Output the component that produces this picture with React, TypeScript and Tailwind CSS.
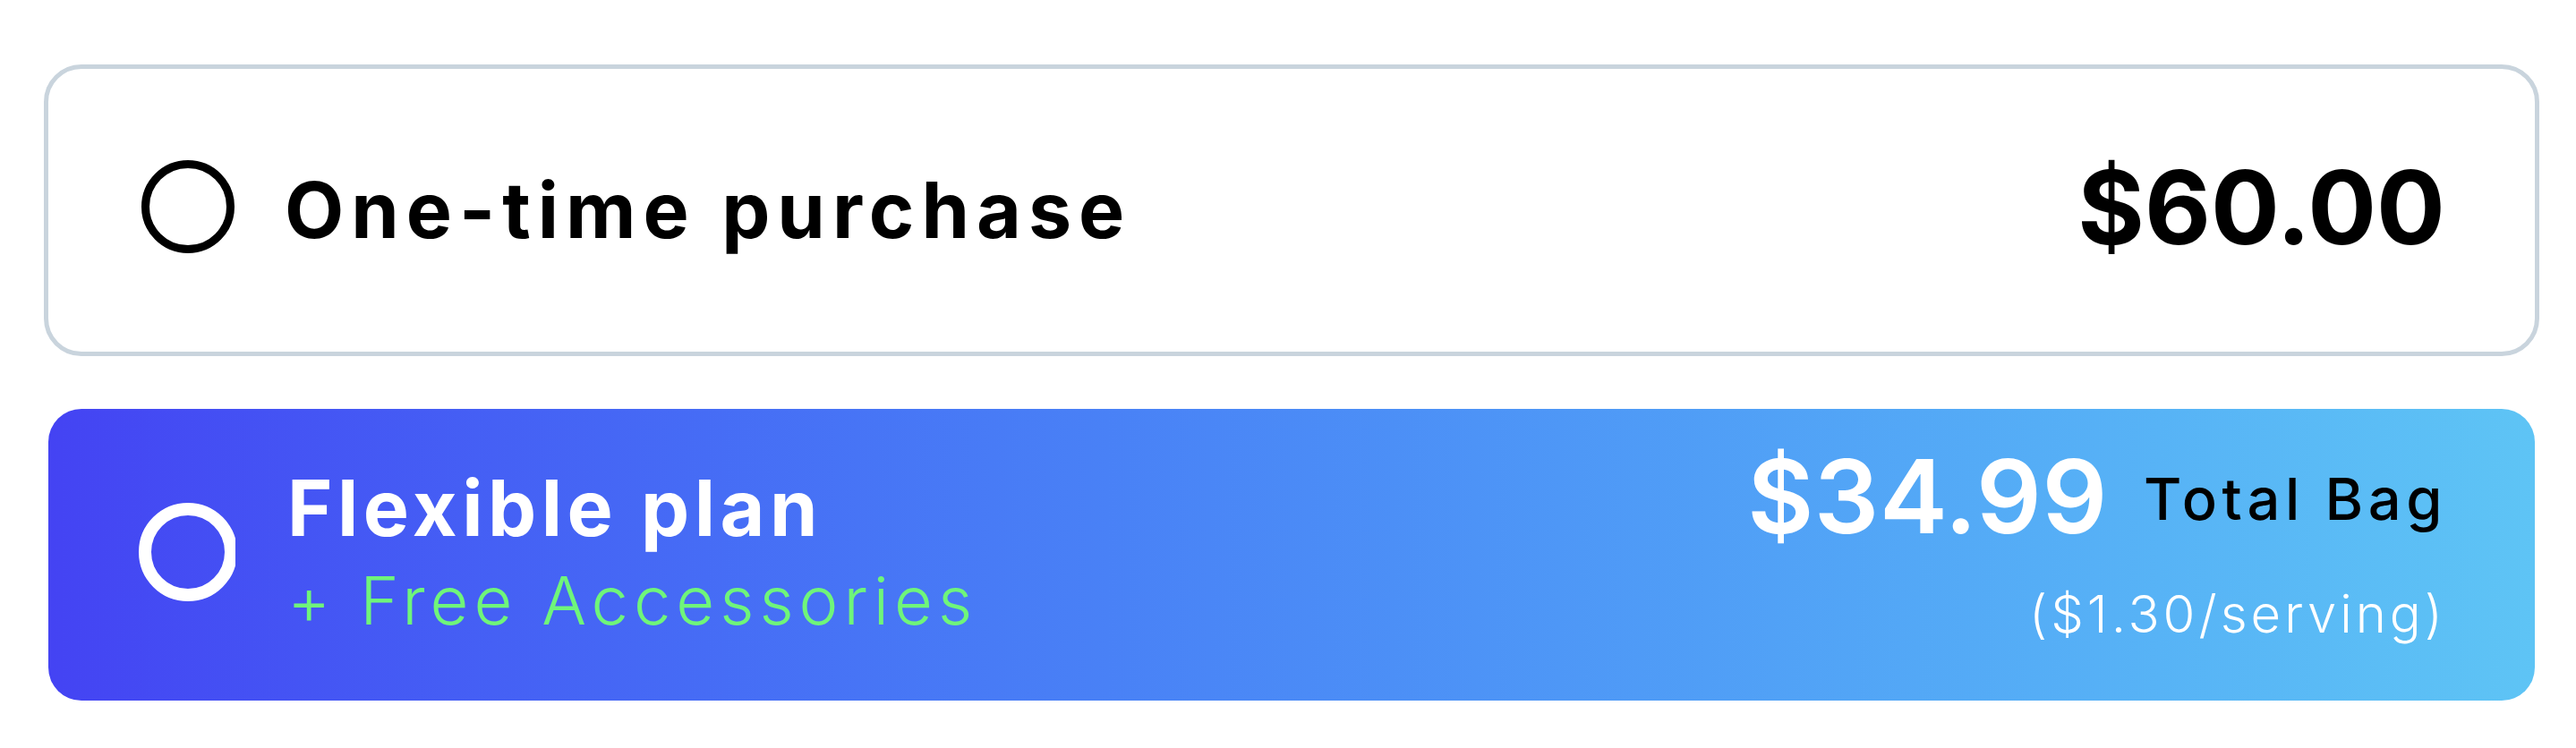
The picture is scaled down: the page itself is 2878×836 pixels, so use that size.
import React from "react";

// purchase option selector: one-time vs flexible plan
export default function App() {
  return (
    <div className="w-full h-[836px] bg-white pt-[72px] pl-[49px] pr-[41px] flex flex-col gap-[59px] font-['Inter','Liberation_Sans',sans-serif]">
      {/* one-time */}
      <div className="h-[326px] border-[5px] border-[#c9d4dd] rounded-[42px] flex items-center justify-between pl-[104px] pr-[100px]">
        <div className="flex items-center gap-[56px]">
          <div className="w-[104px] h-[104px] mb-[8px] rounded-full border-[9px] border-black" />
          <p className="text-[86px] leading-none font-bold text-black tracking-[8px]">
            One-time purchase
          </p>
        </div>
        <p className="mb-[6px] text-[114px] leading-none font-bold text-black">$60.00</p>
      </div>

      {/* flexible plan */}
      <div className="mx-[5px] h-[326px] rounded-[37px] bg-linear-to-r from-[#4443f3] to-[#5ec4f5] flex items-center justify-between pl-[101px] pr-[103px]">
        <div className="flex items-center gap-[58px] mb-[7px]">
          <div className="w-[108px] h-[110px] overflow-hidden shrink-0">
            <div className="w-[110px] h-[110px] rounded-full border-[14px] border-white" />
          </div>
          <div className="flex flex-col gap-[23px]">
            <p className="text-[86px] leading-none font-bold text-white tracking-[5.5px]">
              Flexible plan
            </p>
            <p className="text-[74px] leading-none font-light text-[#6ff57a] tracking-[6px]">
              + Free Accessories
            </p>
          </div>
        </div>
        <div className="flex flex-col items-end gap-[45px] mb-[28px]">
          <div className="flex items-start gap-[40px]">
            <p className="text-[114px] leading-none font-semibold text-white tracking-[0.5px]">
              $34.99
            </p>
            <p className="mt-[27px] -mr-[5px] text-[65px] leading-none font-medium text-black tracking-[5.5px]">
              Total Bag
            </p>
          </div>
          <p className="-mr-[4px] text-[58px] leading-none font-light text-white tracking-[4px]">
            ($1.30/serving)
          </p>
        </div>
      </div>
    </div>
  );
}
